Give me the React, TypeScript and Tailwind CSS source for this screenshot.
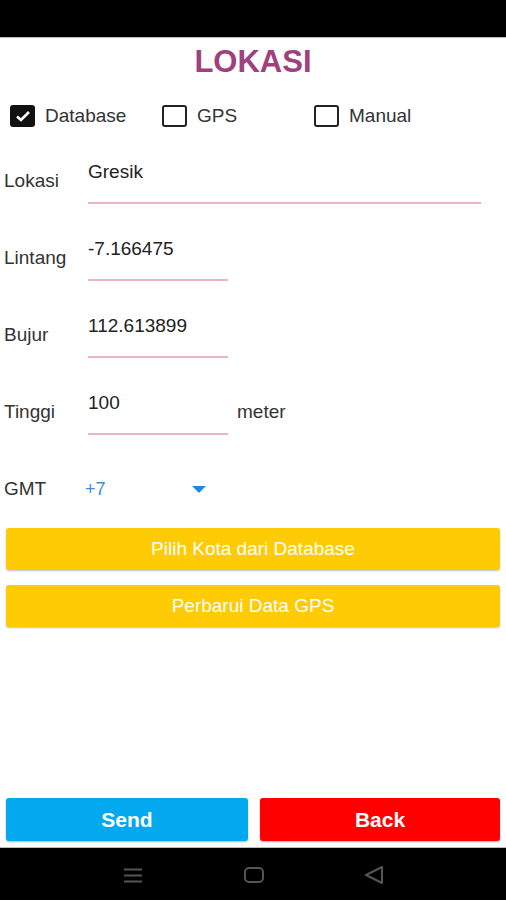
import React from "react";

const font = { fontFamily: '"Liberation Sans", Arial, sans-serif' };

function CheckItem({ label, checked }: { label: string; checked?: boolean }) {
  return (
    <div className="flex w-[152px] items-center">
      {checked ? (
        <div className="flex h-[22px] w-[25px] items-center justify-center rounded-[3px] bg-[#111]">
          <svg width="16" height="12" viewBox="0 0 16 12">
            <path d="M2 6.5 L6 10 L14 2" fill="none" stroke="#fff" strokeWidth="2.6" />
          </svg>
        </div>
      ) : (
        <div className="h-[22px] w-[25px] rounded-[3px] border-2 border-[#222]" />
      )}
      <span className="ml-[10px] text-[19px] text-[#333]">{label}</span>
    </div>
  );
}

function Field({
  label,
  value,
  wide,
  suffix,
}: {
  label: string;
  value: string;
  wide?: boolean;
  suffix?: string;
}) {
  return (
    <div className="flex h-[77px] items-center">
      <div className="w-[88px] pl-[4px] text-[19px] text-[#333]">{label}</div>
      <div
        className={
          "h-[44px] border-b-2 border-[#ebb4c6] " + (wide ? "w-[393px]" : "w-[140px]")
        }
      >
        <div className="text-[19px] leading-[24px] text-[#222]">{value}</div>
      </div>
      {suffix && <div className="ml-[9px] text-[19px] text-[#333]">{suffix}</div>}
    </div>
  );
}

export default function App() {
  return (
    <div className="flex h-[900px] w-[506px] flex-col bg-white" style={font}>
      <div className="h-[37px] bg-black" />
      <div className="h-[1px] bg-[#bbb]" />

      <div className="mt-[6px] text-center text-[31px] font-bold leading-[36px] text-[#a0417f]">
        LOKASI
      </div>

      <div className="mt-[24px] flex h-[24px] items-center pl-[10px]">
        <CheckItem label="Database" checked />
        <CheckItem label="GPS" />
        <CheckItem label="Manual" />
      </div>

      <div className="mt-[15px]">
        <Field label="Lokasi" value="Gresik" wide />
        <Field label="Lintang" value="-7.166475" />
        <Field label="Bujur" value="112.613899" />
        <Field label="Tinggi" value="100" suffix="meter" />
        <div className="flex h-[77px] items-center">
          <div className="w-[85px] pl-[4px] text-[19px] text-[#333]">GMT</div>
          <div className="flex w-[128px] items-center justify-between pr-[7px]">
            <span className="text-[18px] text-[#3b8fd6]">+7</span>
            <svg width="14" height="7" viewBox="0 0 14 7">
              <path d="M0 0 L14 0 L7 7 Z" fill="#1e88e5" />
            </svg>
          </div>
        </div>
      </div>

      <div className="flex flex-col gap-[15px] px-[6px]">
        <button className="h-[42px] rounded-[3px] bg-[#ffcb05] text-[19px] text-white shadow-[0_1px_2px_rgba(0,0,0,0.25)]">
          Pilih Kota dari Database
        </button>
        <button className="h-[42px] rounded-[3px] bg-[#ffcb05] text-[19px] text-white shadow-[0_1px_2px_rgba(0,0,0,0.25)]">
          Perbarui Data GPS
        </button>
      </div>

      <div className="flex-1" />

      <div className="flex gap-[12px] px-[6px] pb-[6px]">
        <button className="h-[43px] w-[242px] rounded-[3px] bg-[#03a9ee] text-[21px] font-bold text-white shadow-[0_1px_2px_rgba(0,0,0,0.3)]">
          Send
        </button>
        <button className="h-[43px] flex-1 rounded-[3px] bg-[#ff0000] text-[21px] font-bold text-white shadow-[0_1px_2px_rgba(0,0,0,0.3)]">
          Back
        </button>
      </div>

      <div className="h-[1px] bg-[#bbb]" />
      <div className="flex h-[52px] items-center bg-black pt-[2px]">
        <div className="flex w-full items-center">
          <svg className="ml-[124px]" width="18" height="15" viewBox="0 0 18 15">
            <path d="M0 1.5 H18 M0 7.5 H18 M0 13.5 H18" stroke="#555" strokeWidth="2" />
          </svg>
          <svg className="ml-[102px]" width="20" height="16" viewBox="0 0 20 16">
            <rect x="1" y="1" width="18" height="14" rx="4" fill="none" stroke="#555" strokeWidth="2" />
          </svg>
          <svg className="ml-[100px]" width="20" height="18" viewBox="0 0 20 18">
            <path d="M18 1 L18 17 L2 9 Z" fill="none" stroke="#555" strokeWidth="2" strokeLinejoin="round" />
          </svg>
        </div>
      </div>
    </div>
  );
}
